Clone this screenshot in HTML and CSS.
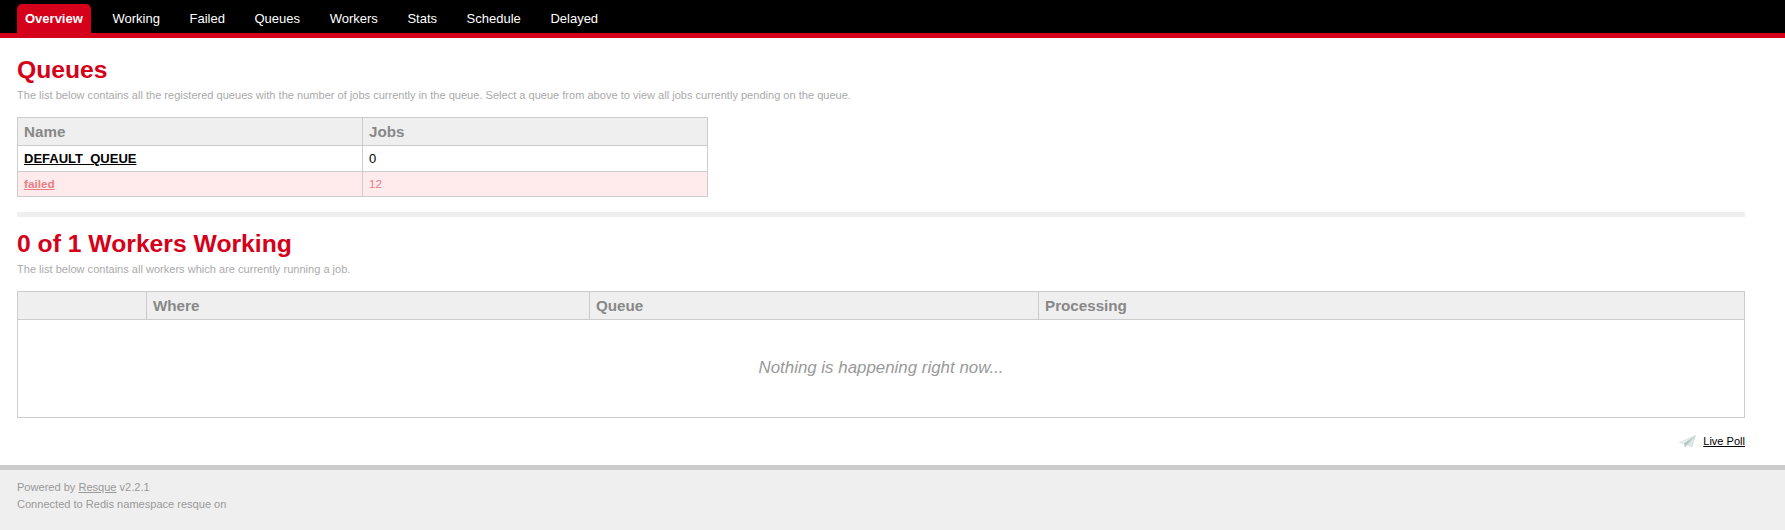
FILE: index.html
```html
<!DOCTYPE html>
<html>
  <head>
    <meta charset="utf-8" />
    <title>Resque.</title>
    <link rel="stylesheet" href="styles.css">
  </head>

  <body>
    <!-- Nav -->
    <div class="header">
      <ul class="nav">
        <li class="current"><a href="#">Overview</a></li>
        <li><a href="#">Working</a></li>
        <li><a href="#">Failed</a></li>
        <li><a href="#">Queues</a></li>
        <li><a href="#">Workers</a></li>
        <li><a href="#">Stats</a></li>
        <li><a href="#">Schedule</a></li>
        <li><a href="#">Delayed</a></li>
      </ul>
    </div>

    <!-- Main -->
    <div class="main">
      <h1>Queues</h1>
      <p class="intro">The list below contains all the registered queues with the number of jobs currently in the queue. Select a queue from above to view all jobs currently pending on the queue.</p>
      <table class="queues">
        <tr>
          <th>Name</th>
          <th>Jobs</th>
        </tr>
        <tr>
          <td class="queue"><a href="#">DEFAULT_QUEUE</a></td>
          <td>0</td>
        </tr>
        <tr class="failed">
          <td class="queue"><a href="#">failed</a></td>
          <td>12</td>
        </tr>
      </table>

      <hr />

      <h1>0 of 1 Workers Working</h1>
      <p class="intro">The list below contains all workers which are currently running a job.</p>
      <table class="workers">
        <tr>
          <th class="col-state"></th>
          <th class="col-where">Where</th>
          <th class="col-queue">Queue</th>
          <th>Processing</th>
        </tr>
        <tr>
          <td colspan="4" class="no-data">Nothing is happening right now...</td>
        </tr>
      </table>

      <div class="poll">
        <svg class="poll-icon" width="17" height="13" viewBox="0 0 17 13">
          <path d="M0.5 7.5 16.5 0.5 5 8.5Z" fill="#eaf1f0" stroke="#c5d2d1" stroke-width="0.5" />
          <path d="M16.5 0.5 5 8.5 6 12.5 8.5 9.5Z" fill="#b5c7c5" />
          <path d="M16.5 0.5 8.5 9.5 13 12Z" fill="#dde7e6" stroke="#c5d2d1" stroke-width="0.5" />
        </svg>
        <a href="#">Live Poll</a>
      </div>
    </div>

    <!-- Footer -->
    <div class="footer">
      <p>Powered by <a href="#">Resque</a> v2.2.1</p>
      <p>Connected to Redis namespace resque on</p>
    </div>
  </body>
</html>
```

FILE: styles.css
```css
html {
  background: #efefef;
}
body {
  margin: 0;
  font-family: "Liberation Sans", Arial, sans-serif;
  background: #efefef;
}

/* top nav */
.header {
  background: #000;
  padding: 4px 17px 0;
  border-bottom: 5px solid #d50019;
}
.nav {
  list-style: none;
  margin: 0;
  padding: 0;
  display: flex;
  gap: 13.6px;
}
.nav a {
  display: block;
  padding: 7px 8px;
  color: #fff;
  font-size: 13px;
  line-height: 15px;
  text-decoration: none;
}
.current a {
  background: #d50019;
  font-weight: bold;
  border-radius: 5px 5px 0 0;
}

.main {
  background: #fff;
  padding: 17px 40px 0 17px;
  height: 427px;
  box-sizing: border-box;
}

h1 {
  margin: 0;
  color: #d50019;
  font-size: 24.7px;
  line-height: 30px;
}
.intro {
  margin: 2px 0 14px;
  color: #aaa;
  font-size: 11.05px;
  line-height: 16px;
}

table {
  border-collapse: collapse;
  table-layout: fixed;
  width: 100%;
}
th {
  background: #efefef;
  color: #888;
  font-size: 15.2px;
  line-height: 17px;
  text-align: left;
  padding: 5px 6px;
  border: 1px solid #ccc;
  height: 27px;
  box-sizing: border-box;
}
td {
  color: #000;
  font-size: 13px;
  line-height: 15px;
  padding: 5px 6px;
  border: 1px solid #ccc;
}
.queues {
  width: 691px;
}
.queue {
  font-weight: bold;
}
td a {
  color: inherit;
}
.failed td {
  background: #ffebeb;
  color: #e97f85;
  font-size: 11.7px;
  line-height: 14px;
}

hr {
  height: 5px;
  margin: 15px 0 12px;
  border: 0;
  background: #efefef;
}

.col-state {
  width: 129px;
}
.col-where {
  width: 443px;
}
.col-queue {
  width: 449px;
}
.no-data {
  height: 98px;
  box-sizing: border-box;
  padding-bottom: 7px;
  text-align: center;
  color: #999;
  font-size: 16.9px;
  font-style: italic;
}

/* live poll */
.poll {
  display: flex;
  justify-content: flex-end;
  align-items: center;
  gap: 7px;
  margin-top: 17px;
  font-size: 11.05px;
  line-height: 13px;
}
.poll a {
  color: #000;
}

.footer {
  border-top: 5px solid #ccc;
  padding: 9px 17px 0;
  color: #999;
  font-size: 11.05px;
  line-height: 17px;
  height: 65px;
  box-sizing: border-box;
}
.footer p {
  margin: 0;
}
.footer a {
  color: inherit;
}
```
